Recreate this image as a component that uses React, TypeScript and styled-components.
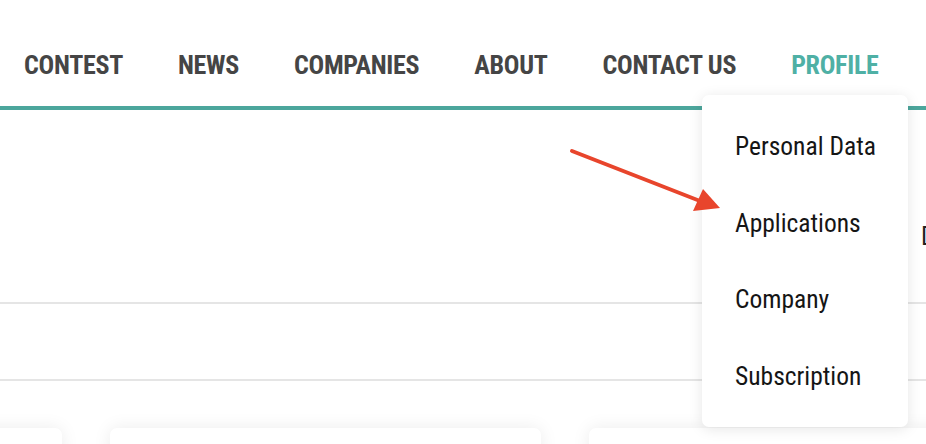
import React from "react";
import styled, { createGlobalStyle } from "styled-components";

const Global = createGlobalStyle`
  html, body { margin: 0; padding: 0; background: #fff; overflow: hidden; }
  body { font-family: Roboto, "Noto Sans", sans-serif; }
`;

const Page = styled.div`
  position: relative;
  width: 926px;
  height: 444px;
  overflow: hidden;
  background: #fff;
`;

const Header = styled.header`
  height: 106px;
  border-bottom: 4px solid #4ca69c;
  display: flex;
  align-items: flex-start;
  position: relative;
`;

const Nav = styled.nav`
  display: flex;
  gap: 55px;
  padding: 49px 0 0 24px;
`;

const NavItem = styled.a<{ $active?: boolean }>`
  font-family: Roboto, sans-serif;
  font-stretch: condensed;
  font-weight: 700;
  font-size: 26px;
  letter-spacing: -0.3px;
  line-height: 32px;
  color: ${(p) => (p.$active ? "#4fb0a5" : "#454545")};
  text-decoration: none;
  white-space: nowrap;
`;

const Dropdown = styled.ul`
  position: absolute;
  left: 702px;
  top: 95px;
  width: 206px;
  height: 332px;
  margin: 0;
  padding: 37px 0 0 0;
  list-style: none;
  background: #fff;
  border-radius: 7px;
  box-shadow: 0 2px 14px rgba(0, 0, 0, 0.1);
  box-sizing: border-box;
  z-index: 5;
`;

const MenuItem = styled.li`
  font-family: Roboto, sans-serif;
  font-stretch: condensed;
  font-weight: 400;
  font-size: 25.5px;
  line-height: 28px;
  height: 76.5px;
  padding-left: 33px;
  color: #151515;
  white-space: nowrap;
`;

const Toolbar = styled.div`
  height: 194px;
  border-bottom: 2px solid #e5e5e5;
  display: flex;
  padding-left: 921px;
  padding-top: 113px;
  box-sizing: border-box;
  white-space: nowrap;
`;

const ToolbarLabel = styled.span`
  font-family: Roboto, sans-serif;
  font-stretch: condensed;
  font-size: 25px;
  line-height: 28px;
  color: #222;
`;

const FilterRow = styled.div`
  height: 75px;
  border-bottom: 2px solid #e5e5e5;
`;

const Cards = styled.div`
  display: grid;
  grid-template-columns: repeat(3, 431px);
  gap: 48px;
  margin-left: -369px;
  margin-top: 47px;
`;

const Card = styled.div`
  height: 200px;
  background: #fff;
  border-radius: 7px;
  box-shadow: 0 0 18px rgba(0, 0, 0, 0.08);
`;

const ArrowSvg = styled.svg`
  position: absolute;
  left: 0;
  top: 0;
  z-index: 6;
  pointer-events: none;
`;

const items = ["CONTEST", "NEWS", "COMPANIES", "ABOUT", "CONTACT US", "PROFILE"];
const menu = ["Personal Data", "Applications", "Company", "Subscription"];

export default function App() {
  return (
    <Page>
      <Global />
      <Header>
        <Nav>
          {items.map((t) => (
            <NavItem key={t} href="#" $active={t === "PROFILE"}>
              {t}
            </NavItem>
          ))}
        </Nav>
      </Header>
      <Toolbar>
        <ToolbarLabel>Date</ToolbarLabel>
      </Toolbar>
      <FilterRow />
      <Cards>
        <Card />
        <Card />
        <Card />
      </Cards>
      <Dropdown>
        {menu.map((m) => (
          <MenuItem key={m}>{m}</MenuItem>
        ))}
      </Dropdown>
      <ArrowSvg width="926" height="444" viewBox="0 0 926 444">
        <line x1="572" y1="151" x2="700" y2="201" stroke="#e8452c" strokeWidth="4" strokeLinecap="round" />
        <polygon points="720,208 693,211 703,189" fill="#e8452c" />
      </ArrowSvg>
    </Page>
  );
}
